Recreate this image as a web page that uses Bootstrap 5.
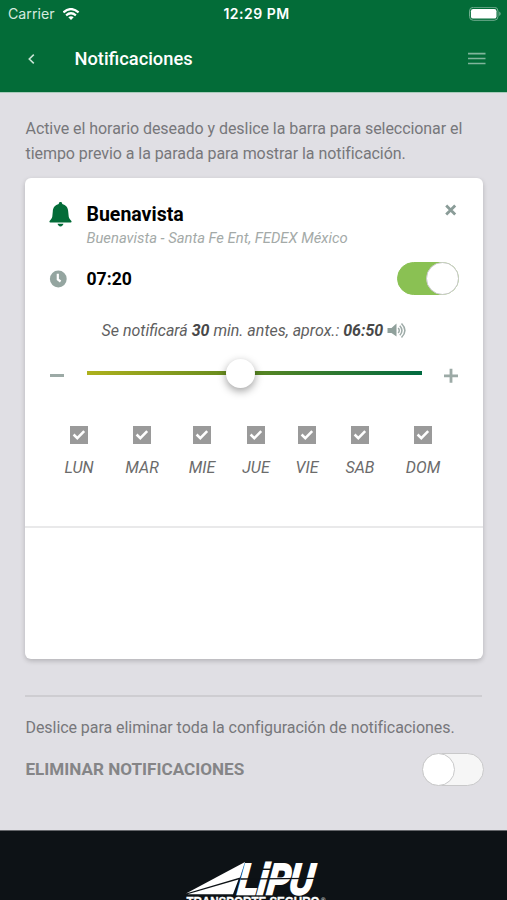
<!DOCTYPE html>
<html lang="es">
<head>
<meta charset="utf-8">
<meta name="viewport" content="width=device-width, initial-scale=1">
<title>Notificaciones</title>
<link href="https://cdn.jsdelivr.net/npm/bootstrap@5.3.0/dist/css/bootstrap.min.css" rel="stylesheet">
<style>
body{font-family:Roboto,"Liberation Sans",sans-serif;background:#e0dfe4;color:#77777b;height:900px;overflow:hidden;font-size:16px}
svg{display:block;flex:none}
.app-head{background:#036c38;height:93px;color:#fff;border-bottom:1px solid #a9cbbb}
.status-line{height:28px;padding:0 5px 0 8px;font:14.2px/28px Inter,Roboto,sans-serif}
.status-side{flex:1 1 0}
.carrier{color:#d5eadf}
.clock-text{font-weight:600;font-size:14px;letter-spacing:.5px;margin-left:3px}
.title-line{height:61px;padding:0 21px 0 27px}
.page-title{font-size:18.3px;font-weight:500;line-height:24px;margin:0 0 0 38.5px}
.page-body{padding:24px 24px 0 25px;height:737px}
.intro{line-height:24.5px;margin:0;white-space:nowrap;letter-spacing:-.06px;padding-left:.5px}
.intro span{display:block;width:max-content}
.panel{height:481px;width:457.5px;margin-top:12px;border:0;border-radius:6px;background:#fff;box-shadow:0 2px 5px rgba(0,0,0,.2);color:#606060}
.panel-top{height:349.5px;border-bottom:2px solid #e9e9ea;padding:22px 23.5px 0 24px}
.stop-name{font-size:19.5px;font-weight:700;color:#000;line-height:30px;height:28px}
.route{font-size:14.8px;font-style:italic;color:#a4aaa8;line-height:20px;height:20px;margin-left:37.5px}
.lead-icon{width:37.5px;flex:none}
.hour{font-size:17.6px;font-weight:700;color:#000;line-height:24px}
.hour-line{margin-top:14px;height:33px}
.switch-track{width:62px;height:33px;border-radius:17px;border:1px solid #c9c9ca;background:#f6f6f6}
.switch-track.on{background:#8ac153;border-color:#8ac153}
.switch-knob{width:33px;height:33px;border-radius:50%;background:#fff;border:1px solid #c9c9ca;margin:-1px}
.notice{font-size:16px;font-style:italic;line-height:24px;margin-top:23.5px;margin-left:52.5px;white-space:nowrap;color:#5f5f5f}
.notice b{color:#484848;font-weight:700}
.slider-line{height:36px;margin-top:14.5px}
.slider-bar{width:335px;height:4px;margin:-4px 0 0 29px;background:linear-gradient(90deg,#aeb11d,#62891f 45%,#006a40)}
.slider-knob{width:29px;height:29px;margin-left:139px;border-radius:50%;background:#fff;box-shadow:0 3px 8px rgba(0,0,0,.38)}
.days{display:grid;grid-template-columns:60px 66px 54px 54px 48px 58px 68px;margin-top:33px;font-style:italic;font-size:16px;line-height:22px;color:#6b6b6b}
.days svg{margin-bottom:12.5px}
.rule{height:2px;background:#cecdd1;margin:36px 0 18.5px;width:457px}
.delete-line{margin-top:13px}
.delete-line .switch-track{margin-right:-.5px}
.delete-title{font-weight:700;font-size:17.1px;color:#858587;padding-left:.5px}
.app-foot{height:70px;background:#0d1216;border-top:1px solid #65676b}
</style>
<script src="https://cdn.jsdelivr.net/npm/bootstrap@5.3.0/dist/js/bootstrap.bundle.min.js"></script>
</head>
<body>
<header class="app-head">
  <div class="status-line d-flex align-items-center">
    <div class="status-side d-flex align-items-center carrier">Carrier
      <svg class="ms-2" width="17" height="13" viewBox="0 0 17 13"><g fill="none" stroke="#fff" stroke-width="2.2"><path d="M.4 4.4Q8-2.300 15.600 4.400"/><path d="M3.1 7.3Q8 3.200 12.900 7.300"/></g><path fill="#fff" d="M5.3 9.3Q8 7.300 10.700 9.300L8 12.100z"/></svg>
    </div>
    <div class="clock-text">12:29 PM</div>
    <div class="status-side d-flex justify-content-end">
      <svg width="33" height="15" viewBox="0 0 33 15"><rect x=".5" y=".3" width="28.5" height="13" rx="3.8" fill="none" stroke="#72ad90"/><rect x="1.9" y="2" width="25.6" height="9.6" rx="2.2" fill="#fff"/><path d="M30.200 4.5v4.5q1.5-.8 1.5-2.2T30.200 4.5" fill="#72ad90"/></svg>
    </div>
  </div>
  <div class="title-line d-flex align-items-center">
    <svg width="9" height="12" viewBox="0 0 9 12"><path d="M6.8 1.7 2.3 6l4.5 4.3" fill="none" stroke="#c8e3d4" stroke-width="1.6"/></svg>
    <h1 class="page-title">Notificaciones</h1>
    <svg class="ms-auto" width="18" height="14" viewBox="0 0 18 14"><path d="M0 1.7h17.500M0 6.500h17.500M0 11.500h17.500" stroke="#80b59b" stroke-width="1.7"/></svg>
  </div>
</header>

<main class="page-body">
  <p class="intro"><span>Active el horario deseado y deslice la barra para seleccionar el</span><span>tiempo previo a la parada para mostrar la notificación.</span></p>

  <section class="card panel">
    <div class="panel-top">
      <div class="d-flex align-items-center">
        <div class="lead-icon"><svg width="23" height="26" viewBox="0 0 23 26"><path fill="#036c38" d="M11.500 1c-1 0-1.700.7-1.700 1.700v.4C6.200 3.900 4 6.700 3.800 10.500L3.300 15.500c-.2 1.500-1 2.600-2.300 3.900-.9.900-.8 2 .3 2h20.400c1.100 0 1.200-1.100.3-2-1.300-1.300-2.100-2.400-2.300-3.900l-.5-5c-.2-3.800-2.400-6.600-6-7.400v-.4c0-1-.7-1.700-1.700-1.700zM8.600 22.800h5.800c-.2 1.500-1.300 2.600-2.900 2.600s-2.700-1.100-2.900-2.600z"/></svg></div>
        <div class="stop-name">Buenavista</div>
        <svg class="ms-auto mb-2" width="16" height="14" viewBox="0 0 16 14"><path d="m3.200 2.500 9 9m0-9-9 9" stroke="#8a9c98" stroke-width="2.8"/></svg>
      </div>
      <div class="route">Buenavista - Santa Fe Ent, FEDEX México</div>
      <div class="hour-line d-flex align-items-center">
        <div class="lead-icon"><svg width="18" height="18" viewBox="0 0 18 18"><circle cx="9.3" cy="9" r="8.4" fill="#94a5a0"/><path d="M8.8 3.8v5.700l2.800 2" fill="none" stroke="#fff" stroke-width="2.2"/></svg></div>
        <div class="hour">07:20</div>
        <div class="switch-track on ms-auto d-flex justify-content-end"><div class="switch-knob"></div></div>
      </div>
      <div class="notice d-flex align-items-center"><span>Se notificará <b>30</b> min. antes, aprox.: <b>06:50</b></span>
        <svg class="ms-1" width="19" height="16" viewBox="0 0 19 16"><path fill="#8fa09b" d="M.5 5h4l5-4.500v13l-5-3.500h-4z"/><g fill="none" stroke="#9eaba8" stroke-width="1.5"><path d="M11.200 5q2.200 2.500 0 5M12.800 2.700q4.300 4.800 0 9.600M14.500.5q6.800 7 0 14"/></g></svg>
      </div>
      <div class="slider-line d-flex align-items-center">
        <svg width="15" height="14" viewBox="0 0 15 14"><path d="M1 7.500h14" stroke="#9caaa6" stroke-width="3"/></svg>
        <div class="slider-bar d-flex align-items-center ms-auto"><div class="slider-knob"></div></div>
        <svg class="ms-auto" width="15" height="15" viewBox="0 0 15 15"><path d="M0 7.800h14M7 .8v14" stroke="#9caaa6" stroke-width="2.8"/></svg>
      </div>
      <svg class="d-none"><symbol id="tick" viewBox="0 0 18 18"><path fill="#9a9a9a" d="M0 0h18v18H0z"/><path d="m3.600 8.500 3.700 3.700 6.900-7.100" fill="none" stroke="#fff" stroke-width="2.5"/></symbol></svg>
      <div class="days">
        <div class="d-flex flex-column align-items-center"><svg width="18" height="18"><use href="#tick"/></svg>LUN</div>
        <div class="d-flex flex-column align-items-center"><svg width="18" height="18"><use href="#tick"/></svg>MAR</div>
        <div class="d-flex flex-column align-items-center"><svg width="18" height="18"><use href="#tick"/></svg>MIE</div>
        <div class="d-flex flex-column align-items-center"><svg width="18" height="18"><use href="#tick"/></svg>JUE</div>
        <div class="d-flex flex-column align-items-center"><svg width="18" height="18"><use href="#tick"/></svg>VIE</div>
        <div class="d-flex flex-column align-items-center"><svg width="18" height="18"><use href="#tick"/></svg>SAB</div>
        <div class="d-flex flex-column align-items-center"><svg width="18" height="18"><use href="#tick"/></svg>DOM</div>
      </div>
    </div>
  </section>

  <div class="rule"></div>
  <p class="intro"><span>Deslice para eliminar toda la configuración de notificaciones.</span></p>
  <div class="delete-line d-flex align-items-center">
    <div class="delete-title">ELIMINAR NOTIFICACIONES</div>
    <div class="switch-track ms-auto d-flex"><div class="switch-knob"></div></div>
  </div>
</main>

<footer class="app-foot d-flex justify-content-center">
  <svg width="144" height="69" viewBox="181.500 831 144 69">
    <g fill="#fff">
      <path d="M244.500 862 185.500 893.500 239.500 877.500z"/>
      <path d="M187 894.200 238 879.500 232.500 894.200z"/>
      <text transform="translate(236.500 893.500) skewX(-7)" font-family="Liberation Sans, sans-serif" font-weight="700" font-style="italic" font-size="43" textLength="75" lengthAdjust="spacingAndGlyphs" stroke="#fff" stroke-width="2.600">LiPU</text>
      <text x="186" y="906" font-family="Liberation Sans, sans-serif" font-weight="700" font-size="13.500" textLength="133" lengthAdjust="spacingAndGlyphs" stroke="#fff" stroke-width=".4">TRANSPORTE SEGURO</text>
      <text x="320.500" y="902" font-family="Liberation Sans, sans-serif" font-size="6">®</text>
    </g>
    <path d="M240 879 315 878.300" stroke="#0d1216" stroke-width="1.300"/>
  </svg>
</footer>
</body>
</html>
